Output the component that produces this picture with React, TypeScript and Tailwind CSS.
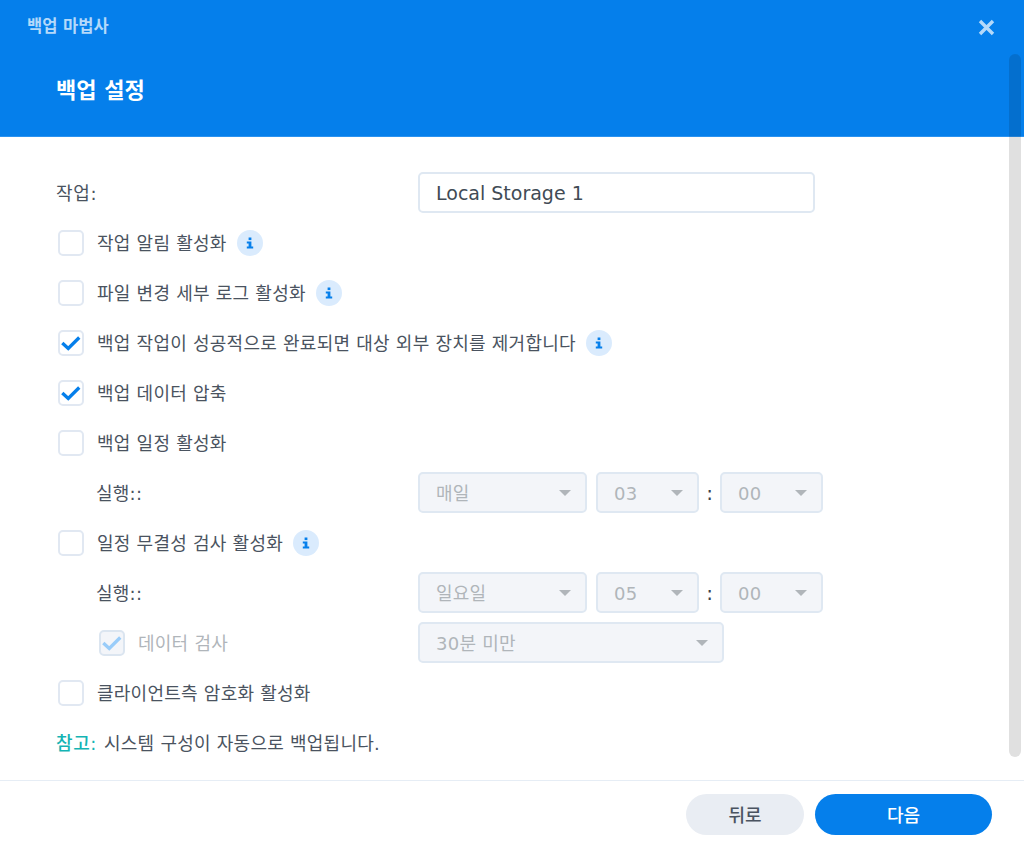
import React from "react";

const font = { fontFamily: '"DejaVu Sans", "Noto Sans CJK KR", sans-serif' };

function Check({ checked, disabled }: { checked?: boolean; disabled?: boolean }) {
  return (
    <span
      className={
        "flex h-[26px] w-[26px] shrink-0 items-center justify-center rounded-[5px] border-2 " +
        (disabled ? "border-[#dbe5f0] bg-[#f3f5f9]" : "border-[#e1e8f2] bg-white")
      }
    >
      {checked && (
        <svg width="24" height="24" viewBox="0 0 24 24" fill="none">
          <path
            d="M2.5 12 L9 18 L21 6"
            stroke={disabled ? "#99ccf9" : "#057feb"}
            strokeWidth="3.6"
          />
        </svg>
      )}
    </span>
  );
}

function Info() {
  return (
    <span className="ml-[10px] flex h-[26px] w-[26px] items-center justify-center rounded-full bg-[#daebfd]">
      <svg width="10" height="12" viewBox="0 0 10 12" fill="#057feb">
        <rect x="3.6" y="0.5" width="2.8" height="2.6" />
        <path d="M1.8 4.6 H6.4 V9.6 H8.2 V11.4 H1.8 V9.6 H3.6 V6.4 H1.8 Z" />
      </svg>
    </span>
  );
}

function CheckRow({ label, checked, info }: { label: string; checked?: boolean; info?: boolean }) {
  return (
    <div className="flex h-10 items-center pl-[2px]">
      <Check checked={checked} />
      <span className="ml-[13px] text-[18px] tracking-[.25px] text-[#4a5360]">{label}</span>
      {info && <Info />}
    </div>
  );
}

function Select({ value, w }: { value: string; w: string }) {
  return (
    <div
      className={
        "mb-px flex h-[41px] items-center justify-between rounded-[5px] border-2 border-[#dfe8f2] bg-[#f3f5f9] pl-4 pr-[14px] pt-px text-[18px] tracking-[.25px] text-[#b0b5ba] " +
        w
      }
    >
      <span>{value}</span>
      <span className="h-0 w-0 border-x-[6px] border-t-[6px] border-x-transparent border-t-[#b0b5ba]" />
    </div>
  );
}

function ScheduleRow({ day, hour }: { day: string; hour: string }) {
  return (
    <div className="flex h-10 items-center">
      <span className="w-[362px] pl-[40px] text-[18px] tracking-[.25px] text-[#4a5360]">실행::</span>
      <Select value={day} w="w-[169px]" />
      <Select value={hour} w="ml-[9px] w-[103px]" />
      <span className="w-[21px] text-center text-[20px] text-[#3a424c]">:</span>
      <Select value="00" w="w-[103px]" />
    </div>
  );
}

export default function App() {
  return (
    <div className="relative flex h-[846px] w-[1024px] flex-col overflow-hidden bg-white" style={font}>
      <header className="h-[137px] border-b border-[#2a92f0] bg-[#057feb] pl-[27px]">
        <div className="flex h-[54px] items-center justify-between pr-[29px]">
          <span className="text-[16.5px] font-bold text-[#b4d9fa]">백업 마법사</span>
          <svg width="17" height="17" viewBox="0 0 17 17" fill="none">
            <path d="M2 2 L15 15 M15 2 L2 15" stroke="#b4d9fa" strokeWidth="3.4" />
          </svg>
        </div>
        <h1 className="ml-[29px] mt-[17px] text-[22px] font-bold leading-[40px] text-white">백업 설정</h1>
      </header>

      <main className="flex flex-1 flex-col gap-[10px] pl-[56px] pt-[36px]">
        <div className="flex h-10 items-center">
          <span className="w-[362px] text-[18px] tracking-[.7px] text-[#4a5360]">작업:</span>
          <div className="mb-px flex h-[41px] w-[397px] items-center rounded-[5px] border-2 border-[#dfe8f2] pl-4 pt-px text-[19px] text-[#414b55]">
            Local Storage 1
          </div>
        </div>
        <CheckRow label="작업 알림 활성화" info />
        <CheckRow label="파일 변경 세부 로그 활성화" info />
        <CheckRow label="백업 작업이 성공적으로 완료되면 대상 외부 장치를 제거합니다" checked info />
        <CheckRow label="백업 데이터 압축" checked />
        <CheckRow label="백업 일정 활성화" />
        <ScheduleRow day="매일" hour="03" />
        <CheckRow label="일정 무결성 검사 활성화" info />
        <ScheduleRow day="일요일" hour="05" />
        <div className="flex h-10 items-center">
          <div className="flex w-[362px] items-center pl-[43px]">
            <Check checked disabled />
            <span className="ml-[13px] text-[18px] tracking-[.25px] text-[#b0b5ba]">데이터 검사</span>
          </div>
          <Select value="30분 미만" w="w-[306px]" />
        </div>
        <CheckRow label="클라이언트측 암호화 활성화" />
        <div className="flex h-10 items-center text-[18px] tracking-[.25px] text-[#4a5360]">
          <span className="font-medium tracking-[.6px] text-[#14b4b4]">참고:</span>
          <span className="ml-[7px]">시스템 구성이 자동으로 백업됩니다.</span>
        </div>
      </main>

      <footer className="flex h-[66px] items-start justify-end gap-[11px] border-t border-[#e6edf5] pr-[32px] pt-[13px]">
        <button className="h-[41px] w-[118px] rounded-full bg-[#e9edf3] pt-px text-[18px] font-medium text-[#4a5360]">뒤로</button>
        <button className="h-[41px] w-[177px] rounded-full bg-[#057feb] pt-px text-[18px] font-medium text-white">다음</button>
      </footer>

      {/* overlay scrollbar */}
      <div className="absolute left-[1009px] top-[54px] h-[703px] w-3 rounded-full bg-black/[.12]" />
    </div>
  );
}
